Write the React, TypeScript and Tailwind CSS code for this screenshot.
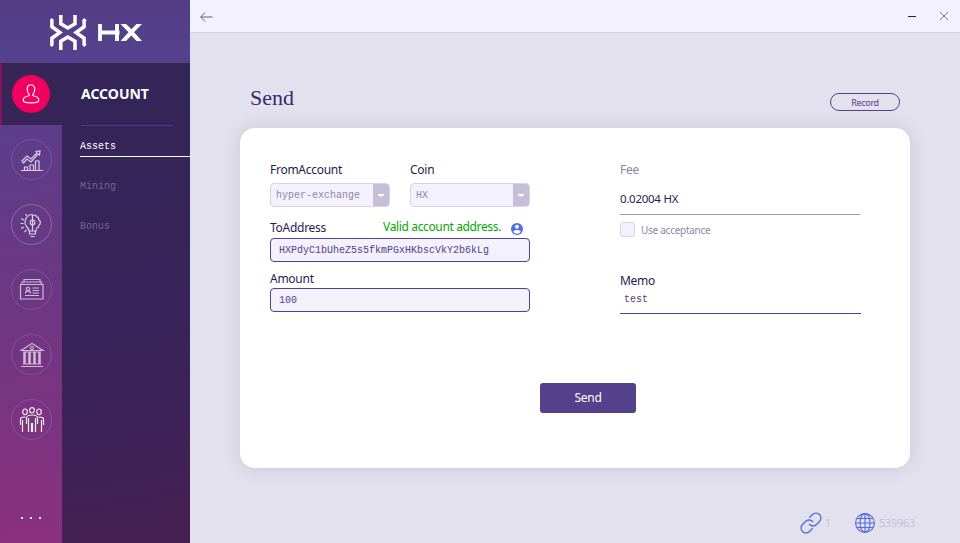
import type { ReactNode } from 'react';

const mono = "font-['Liberation_Mono',monospace] text-[10px] whitespace-pre tracking-normal";

function Ring({ children, bright = false }: { children: ReactNode; bright?: boolean }) {
  return (
    <div className="flex h-[65px] w-full items-center justify-center pl-px">
      <div className={`flex h-[41px] w-[41px] items-center justify-center rounded-full border ${bright ? 'border-white/25' : 'border-[#b8a0f0]/25'}`}>
        {children}
      </div>
    </div>
  );
}

function Glyph({ children, opacity }: { children: ReactNode; opacity: string }) {
  return (
    <svg width="26" height="26" viewBox="0 0 26 26" fill="none" stroke="white" strokeWidth="1.2" className={opacity}>
      {children}
    </svg>
  );
}

function Logo() {
  return (
    <svg width="94" height="36" viewBox="50 15 94 36" fill="none" stroke="white" strokeWidth="3.5">
      <path d="M60.800 15v8.800l7 4.200 7.200-4.200V15M60.800 50v-8.800l7-4.200 7.200 4.200V50" />
      <path d="M50.500 19.200l1.400 1.300v6.300l8 5.700-8 5.700v6.300l-1.400 1.300M85.500 19.200l-1.400 1.300v6.300l-8 5.700 8 5.700v6.300l1.400 1.300" />
      <path d="M100 24v17M117 24v17M100 32.500h19.500" strokeWidth="3.800" />
      <path d="M120.500 24h5.500l5.500 5.200L136.500 24h5.500l-8 8.300 8 8.700h-5.500l-5.200-5.500L126 41h-5.500l8-8.700z" fill="white" stroke="none" />
    </svg>
  );
}

function Select({ value }: { value: string }) {
  return (
    <div className="flex h-6 w-[120px] overflow-hidden rounded-[4px] border border-[#d8d4e8] bg-[#f3f1fb]">
      <div className={`${mono} flex flex-1 items-center pl-[5px] pt-px text-[#8f88a8]`}><span className="scale-y-110">{value}</span></div>
      <div className="flex w-4 items-center justify-center bg-[#c5bfd8]">
        <svg width="6" height="3" viewBox="0 0 6 3" fill="white"><path d="M0 0h6v1L4 2.500H2L0 1z" /></svg>
      </div>
    </div>
  );
}

function Field({ value }: { value: string }) {
  return (
    <div className={`${mono} flex h-6 items-center rounded-[4px] border border-[#54408b] bg-[#f3f1fb] pl-2 pt-px text-[#54408b]`}>
      <span className="scale-y-110">{value}</span>
    </div>
  );
}

export default function App() {
  return (
    <div className="flex h-[543px] w-[960px] overflow-hidden bg-[#e3e1ed] font-['Noto_Sans',sans-serif] text-xs text-[#261c4f]">
      <aside className="flex h-full w-[190px] flex-col">
        <div className="flex h-[63px] items-start bg-linear-to-b from-[#533d84] to-[#55418f] pt-[15px] pl-[50px]"><Logo /></div>
        <div className="flex h-[480px]">
          <nav className="flex w-[62px] flex-col bg-linear-[172deg,#5a3e8b_8%,#6c3783_48%,#8b307e_100%]">
            <div className="flex h-[62px] items-center justify-center bg-[#372558] bg-linear-to-r from-[#a0105c] to-transparent to-[3px]">
              <div className="flex h-[38px] w-[38px] items-center justify-center rounded-full bg-[#f0005f]">
                <svg width="18" height="20" viewBox="0 0 18 20" fill="none" stroke="white" strokeWidth="1.1">
                  <path d="M9 .8C6.500.8 5.200 2.600 5.200 5.300c0 2.200.8 4 2 5.200.3 1-.2 1.300-1.200 1.500-3 .6-4.800 2-4.800 4.200 0 1.800 3.300 2.700 7.800 2.700s7.800-.9 7.800-2.700c0-2.200-1.800-3.600-4.800-4.200-1-.2-1.500-.5-1.200-1.500 1.200-1.200 2-3 2-5.200C12.800 2.600 11.500.8 9 .8z" />
                </svg>
              </div>
            </div>
            <div className="h-[2px]" />
            <Ring>
              <Glyph opacity="opacity-75">
                <path d="M2 23.500h22M5.500 23v-3h3v3M11 23v-5h3.500v5M16.500 23v-9H20v9" />
                <path d="M3 14l5-5 4 3 6-6-1-1.500 4-.5-.5 4-1.500-1-7 8-4-3-3.500 4z" />
              </Glyph>
            </Ring>
            <Ring bright>
              <Glyph opacity="opacity-75">
                <path d="M13.500 2.500a7.500 7.500 0 0 0-5.500 12.500c1.300 1.500 2 2.500 2 4h7c0-1.500.5-2.500 1.500-4M13.500 2.500V19M14 3l3 .3.5 1.500 2 .7v2l1.700 1.500v3l-1.200 1-.5 2-1.500.5" />
                <circle cx="13.500" cy="10.500" r="2.300" />
                <path d="M10.500 19v3h6v-3M11.500 24.500h4M6.500 2l1.500 2M2 6.500l3 1.500M1.500 11.500h3M2 16.500l3-1.500M5.500 20l2-2" />
              </Glyph>
            </Ring>
            <Ring>
              <Glyph opacity="opacity-65">
                <path d="M1.500 7.500h22.500v14.500H1.500zM3 7v-2h19.500v2M5 5V2.500h16V5" />
                <circle cx="9" cy="12" r="1.700" />
                <path d="M6.500 16.500c0-3.500 5-3.500 5 0M13.500 11H20M13.500 13.500H20M13.500 16H20M6 18.500h14" />
              </Glyph>
            </Ring>
            <Ring>
              <Glyph opacity="opacity-65">
                <path d="M2 8.500L13 1.500l11 7zM4 10h18M4 22h18M2 24.500h22" />
                <circle cx="13" cy="6" r="1.500" />
                <path d="M5.500 10v12M10.500 10v12M15.500 10v12M20.500 10v12" strokeWidth="2.600" />
              </Glyph>
            </Ring>
            <Ring>
              <Glyph opacity="opacity-90">
                <ellipse cx="13" cy="3.300" rx="2.400" ry="2.700" />
                <ellipse cx="6" cy="4.800" rx="2.300" ry="2.800" />
                <ellipse cx="20" cy="4.800" rx="2.300" ry="2.800" />
                <path d="M9.500 25V11M16.500 25V11M12.500 25v-9M13.500 25v-9M7.500 17v-6c0-4 11-4 11 0v6M3.500 25V13M1.500 18v-5c0-2.500 1-3 5-3M22.500 25V13M24.500 18v-5c0-2.500-1-3-5-3" />
              </Glyph>
            </Ring>
            <div className="flex flex-1 items-end justify-center gap-[7px] pb-[24px]">
              <i className="size-[2px] bg-white/90" /><i className="size-[2px] bg-white/90" /><i className="size-[2px] bg-white/90" />
            </div>
          </nav>
          <section className="flex flex-1 flex-col bg-linear-[170deg,#332558_0%,#38245a_55%,#3c2258_72%,#482052_100%]">
            <div className="ml-[19px] h-[63px] w-[92px] border-b border-[#4c3b82] pt-[20px] text-[14px] leading-[22px] font-bold text-white">ACCOUNT</div>
            <div className={`${mono} ml-[18px] h-[31px] border-b border-white pt-[15px] text-white leading-[12px]`}><div className="scale-y-110">Assets</div></div>
            <div className={`${mono} ml-[18px] pt-[24px] leading-[12px] text-[#74658f]`}><div className="scale-y-110">Mining</div></div>
            <div className={`${mono} ml-[18px] pt-[28px] leading-[12px] text-[#74658f]`}><div className="scale-y-110">Bonus</div></div>
          </section>
        </div>
      </aside>

      <main className="flex flex-1 flex-col">
        <header className="flex h-[33px] items-center justify-between border-b border-[#d3cfe6] bg-[#f3f1fb] pr-[11px] pl-[10px]">
          <svg width="13" height="11" viewBox="0 0 13 11" fill="none" stroke="#665d85"><path d="M12.500 6H.8M5 1.500L.7 6 5 10.500" /></svg>
          <div className="flex items-center gap-[23px]">
            <i className="h-px w-2 bg-[#261c4f]" />
            <svg width="10" height="10" viewBox="0 0 10 10" fill="none" stroke="#7e7791"><path d="M1 1l8 8M9 1L1 9" /></svg>
          </div>
        </header>

        <div className="flex h-[95px] items-end justify-between pr-[60px] pl-[60px]">
          <h1 className="pb-[19px] font-['Liberation_Serif',serif] text-[22px] leading-[22px] text-[#392a6b]">Send</h1>
          <button className="mb-[17px] h-[18px] w-[70px] rounded-full border border-[#54408b] pt-[2px] text-[9px] leading-[14px] tracking-[-0.3px] text-[#54408b]">Record</button>
        </div>

        <section className="ml-[50px] flex h-[340px] w-[670px] flex-col rounded-[15px] bg-white px-[30px] pt-[32px] tracking-[-0.270px] shadow-[0_0_18px_rgba(80,65,130,0.16)]">
          <div className="flex h-[223px] w-full">
            <div className="w-[260px]">
              <div className="flex gap-5">
                <label className="block w-[120px] leading-5">FromAccount<span className="mt-[3px] block"><Select value="hyper-exchange" /></span></label>
                <label className="block w-[120px] leading-5">Coin<span className="mt-[3px] block"><Select value="HX" /></span></label>
              </div>
              <div className="mt-[11px] flex h-5 items-center leading-5">
                <span>ToAddress</span>
                <span className="mr-[10px] mb-[2px] ml-auto tracking-[-0.360px] text-[#00a800]">Valid account address.</span>
                <svg width="12" height="12" viewBox="0 0 24 24" className="mt-[2px] mr-[7px]"><circle cx="12" cy="12" r="12" fill="#4f6fe8" /><circle cx="12" cy="7.500" r="3.800" fill="white" /><path d="M4.500 17.500c1.500-5 13.500-5 15 0-3 5-12 5-15 0z" fill="white" /></svg>
              </div>
              <Field value="HXPdyC1bUheZ5s5fkmPGxHKbscVkY2b6kLg" />
              <div className="mt-[7px] h-[19px] leading-5">Amount</div>
              <Field value="100" />
            </div>
            <div className="ml-[90px] w-[241px]">
              <div className="leading-5 text-[#8c86a5]">Fee</div>
              <div className="mt-[9px] h-[26px] w-[240px] border-b border-[#9c9c9c] text-[11.500px] leading-5">0.02004 HX</div>
              <div className="mt-[7px] flex h-[15px] items-center gap-[6px]">
                <i className="size-[15px] rounded-[3px] border border-[#d8d4e8] bg-[#f3f1fb]" />
                <span className="pt-[2px] text-[10px] text-[#8c86a5]">Use acceptance</span>
              </div>
              <div className="mt-[34px] leading-5">Memo</div>
              <div className={`${mono} h-[23px] border-b border-[#54408b] pl-1 leading-[18px] text-[#54408b]`}><div className="scale-y-110">test</div></div>
            </div>
          </div>
          <button className="ml-[270px] w-[96px] rounded-[3px] bg-[#54408b] leading-[30px] text-white">Send</button>
        </section>

        <footer className="flex flex-1 items-center justify-end pt-[35px] pr-[44px] text-[10.500px] font-light text-[#b4b0ca]">
          <svg width="24" height="24" viewBox="0 0 24 24" fill="none" stroke="#5068e0" strokeWidth="1.300">
            <path d="M10 13a5 5 0 0 0 7.540.540l3-3a5 5 0 0 0-7.070-7.070l-3.200 3.200M14 11a5 5 0 0 0-7.540-.540l-3 3a5 5 0 0 0 7.070 7.070l3.200-3.200" />
          </svg>
          <span className="mr-[24px] ml-[2px] w-[6px]">1</span>
          <svg width="20" height="20" viewBox="0 0 20 20" fill="none" stroke="#5068e0" strokeWidth="1.100">
            <circle cx="10" cy="10" r="9.400" /><ellipse cx="10" cy="10" rx="5" ry="9.400" />
            <path d="M10 .5v19M.5 10h19M2 5.500h16M2 14.500h16" />
          </svg>
          <span className="ml-[4px] w-[37px]">539963</span>
        </footer>
      </main>
    </div>
  );
}
